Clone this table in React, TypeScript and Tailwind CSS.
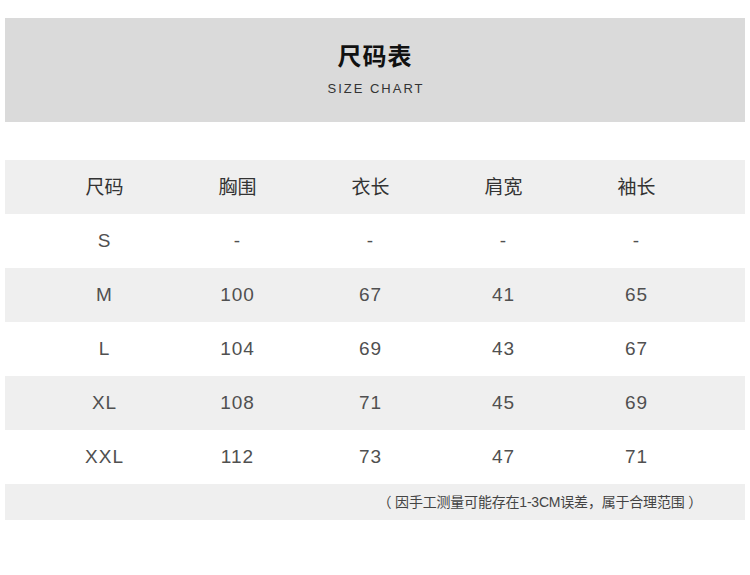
import React from "react";

const cjk = { fontFamily: '"Liberation Sans", "Noto Sans CJK SC", sans-serif' };

const headers = ["尺码", "胸围", "衣长", "肩宽", "袖长"];
const rows = [
  ["S", "-", "-", "-", "-"],
  ["M", "100", "67", "41", "65"],
  ["L", "104", "69", "43", "67"],
  ["XL", "108", "71", "45", "69"],
  ["XXL", "112", "73", "47", "71"],
];

export default function App() {
  return (
    <div className="w-[750px] h-[575px] bg-white overflow-hidden" style={cjk}>
      <div className="pt-[18px] px-[5px]">
        <div className="h-[104px] bg-[#dadada] flex flex-col items-center">
          <div className="mt-[24px] text-[24px] leading-[30px] font-bold text-[#111] tracking-[1px]">尺码表</div>
          <div className="mt-[9px] text-[13px] leading-[16px] text-[#333] tracking-[2px] pl-[2px]">SIZE CHART</div>
        </div>
      </div>
      <div className="mt-[38px] px-[5px]">
        <div className="h-[54px] bg-[#efefef] grid grid-cols-[133px_133px_133px_133px_133px] pl-[33px] items-center text-[19px] text-[#333]">
          {headers.map((h) => (
            <div key={h} className="text-center pt-[2px]">{h}</div>
          ))}
        </div>
        {rows.map((r, i) => (
          <div
            key={r[0]}
            className={`h-[54px] grid grid-cols-[133px_133px_133px_133px_133px] pl-[33px] items-center text-[19px] text-[#505050] tracking-[1px] ${i % 2 === 1 ? "bg-[#efefef]" : "bg-white"}`}
          >
            {r.map((c, j) => (
              <div key={j} className="text-center">{c}</div>
            ))}
          </div>
        ))}
        <div className="h-[36px] bg-[#efefef] flex items-center justify-end pr-[43px] text-[14px] text-[#444] tracking-[-0.2px]">
          （ 因手工测量可能存在1-3CM误差，属于合理范围 ）
        </div>
      </div>
    </div>
  );
}
